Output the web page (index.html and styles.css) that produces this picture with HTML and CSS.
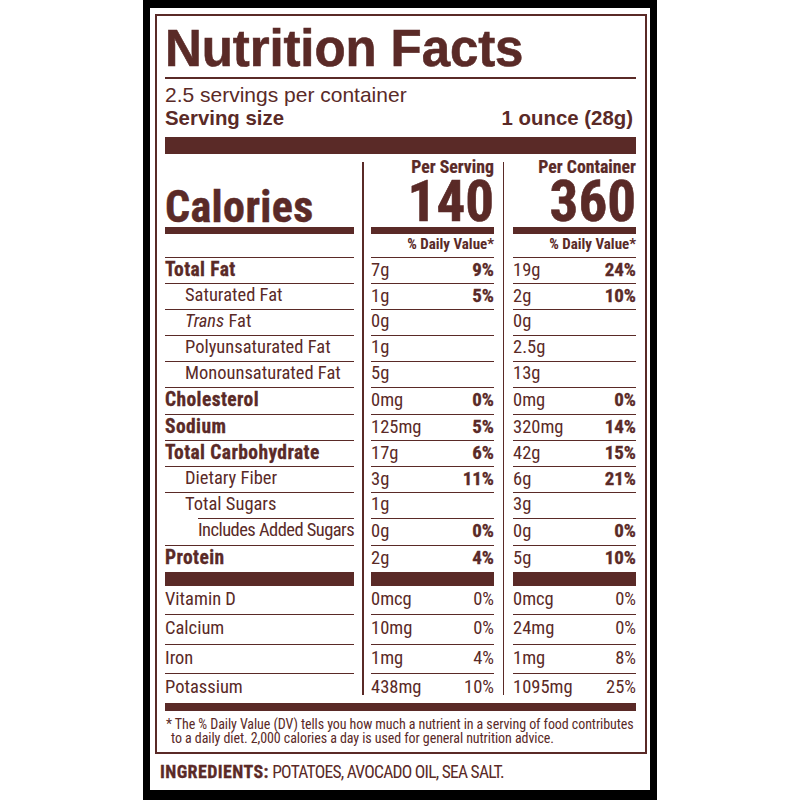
FILE: index.html
```html
<!DOCTYPE html>
<html lang="en">
<head>
<meta charset="utf-8">
<title>Nutrition Facts</title>
<link rel="stylesheet" href="styles.css">
</head>
<body>
<div class="frame">
  <div class="panel">
    <section class="facts">
      <h1 class="title">Nutrition Facts</h1>
      <div class="rule-thin"></div>
      <div class="servings">2.5 servings per container</div>
      <div class="serving-size"><span>Serving size</span><span>1 ounce (28g)</span></div>
      <div class="bar-xl"></div>

      <div class="grid">
        <div class="col col-label">
          <div class="head"><div class="calories">Calories</div></div>
          <div class="bar-md"></div>
          <div class="row dv"></div>
          <div class="row b">Total Fat</div>
          <div class="row s1">Saturated Fat</div>
          <div class="row s1"><span><i>Trans</i> Fat</span></div>
          <div class="row s1">Polyunsaturated Fat</div>
          <div class="row s1">Monounsaturated Fat</div>
          <div class="row b">Cholesterol</div>
          <div class="row b">Sodium</div>
          <div class="row b">Total Carbohydrate</div>
          <div class="row s1">Dietary Fiber</div>
          <div class="row s1 indent-line">Total Sugars</div>
          <div class="row s2">Includes Added Sugars</div>
          <div class="row b last">Protein</div>
          <div class="bar-lg"></div>
          <div class="vrow">Vitamin D</div>
          <div class="vrow">Calcium</div>
          <div class="vrow">Iron</div>
          <div class="vrow last">Potassium</div>
        </div>

        <div class="vdiv vdiv-a"></div>

        <div class="col col-mid">
          <div class="head"><div class="per">Per Serving</div><div class="big">140</div></div>
          <div class="bar-md"></div>
          <div class="row dv">% Daily Value*</div>
          <div class="row"><span class="v">7g</span><span class="p">9%</span></div>
          <div class="row"><span class="v">1g</span><span class="p">5%</span></div>
          <div class="row"><span class="v">0g</span></div>
          <div class="row"><span class="v">1g</span></div>
          <div class="row"><span class="v">5g</span></div>
          <div class="row"><span class="v">0mg</span><span class="p">0%</span></div>
          <div class="row"><span class="v">125mg</span><span class="p">5%</span></div>
          <div class="row"><span class="v">17g</span><span class="p">6%</span></div>
          <div class="row"><span class="v">3g</span><span class="p">11%</span></div>
          <div class="row"><span class="v">1g</span></div>
          <div class="row"><span class="v">0g</span><span class="p">0%</span></div>
          <div class="row last"><span class="v">2g</span><span class="p">4%</span></div>
          <div class="bar-lg"></div>
          <div class="vrow"><span>0mcg</span><span>0%</span></div>
          <div class="vrow"><span>10mg</span><span>0%</span></div>
          <div class="vrow"><span>1mg</span><span>4%</span></div>
          <div class="vrow last"><span>438mg</span><span>10%</span></div>
        </div>

        <div class="vdiv vdiv-b"></div>

        <div class="col col-right">
          <div class="head"><div class="per">Per Container</div><div class="big">360</div></div>
          <div class="bar-md"></div>
          <div class="row dv">% Daily Value*</div>
          <div class="row"><span class="v">19g</span><span class="p">24%</span></div>
          <div class="row"><span class="v">2g</span><span class="p">10%</span></div>
          <div class="row"><span class="v">0g</span></div>
          <div class="row"><span class="v">2.5g</span></div>
          <div class="row"><span class="v">13g</span></div>
          <div class="row"><span class="v">0mg</span><span class="p">0%</span></div>
          <div class="row"><span class="v">320mg</span><span class="p">14%</span></div>
          <div class="row"><span class="v">42g</span><span class="p">15%</span></div>
          <div class="row"><span class="v">6g</span><span class="p">21%</span></div>
          <div class="row"><span class="v">3g</span></div>
          <div class="row"><span class="v">0g</span><span class="p">0%</span></div>
          <div class="row last"><span class="v">5g</span><span class="p">10%</span></div>
          <div class="bar-lg"></div>
          <div class="vrow"><span>0mcg</span><span>0%</span></div>
          <div class="vrow"><span>24mg</span><span>0%</span></div>
          <div class="vrow"><span>1mg</span><span>8%</span></div>
          <div class="vrow last"><span>1095mg</span><span>25%</span></div>
        </div>
      </div>

      <div class="bar-foot"></div>
      <p class="footnote">* The % Daily Value (DV) tells you how much a nutrient in a serving of food contributes<br>to a daily diet. 2,000 calories a day is used for general nutrition advice.</p>
    </section>
    <p class="ingredients"><b>INGREDIENTS:</b> POTATOES, AVOCADO OIL, SEA SALT.</p>
  </div>
</div>
</body>
</html>
```

FILE: styles.css
```css
:root {
  --c: #5a2a27;
  --narrow: "Roboto Condensed", "Liberation Sans Narrow", "Arial Narrow", sans-serif;
  --wide: "Liberation Sans", Arial, sans-serif;
}

* {
  box-sizing: border-box;
  margin: 0;
  padding: 0;
}

html,
body {
  background: #fff;
}

body {
  display: flex;
  justify-content: center;
  font-family: var(--wide);
  color: var(--c);
}

.frame {
  width: 514px;
  height: 800px;
  background: #000;
  padding: 8px 7px 10px;
}

.panel {
  background: #fff;
  height: 782px;
  padding: 6px 3px 0 5px;
}

.facts {
  border: 2px solid var(--c);
  padding: 7px 9px 6.8px 8px;
}

.title {
  font-family: var(--wide);
  font-weight: bold;
  font-size: 51px;
  line-height: 51px;
  letter-spacing: -0.1px;
  -webkit-text-stroke: 0.6px var(--c);
}

.rule-thin {
  margin-top: 3px;
  height: 1.5px;
  background: var(--c);
}

.servings {
  margin-top: 6px;
  font-size: 21px;
  line-height: 19px;
}

.serving-size {
  margin-top: 5.5px;
  display: flex;
  justify-content: space-between;
  font-weight: bold;
  font-size: 20.4px;
  line-height: 19px;
  padding-right: 3px;
}

.bar-xl {
  margin-top: 9px;
  height: 17px;
  background: var(--c);
}

.grid {
  display: flex;
}

.col-label {
  width: 189px;
}

.col-mid {
  width: 123px;
}

.col-right {
  flex: 1;
}

.vdiv {
  width: 1.5px;
  margin-top: 8px;
  background: var(--c);
}

.vdiv-a {
  margin-left: 8px;
  margin-right: 7.5px;
}

.vdiv-b {
  margin-left: 8.5px;
  margin-right: 9px;
}

.head {
  height: 73px;
  display: flex;
  flex-direction: column;
  justify-content: flex-end;
  text-align: right;
  font-family: var(--narrow);
  font-weight: bold;
}

.calories {
  text-align: left;
  font-size: 44px;
  line-height: 40px;
  letter-spacing: 0.4px;
  -webkit-text-stroke: 0.5px var(--c);
}

.per {
  font-size: 17.8px;
  line-height: 16px;
  margin-bottom: 3.6px;
  -webkit-text-stroke: 0.2px var(--c);
}

.big {
  font-size: 57px;
  line-height: 46px;
  margin-bottom: 2.5px;
  -webkit-text-stroke: 0.6px var(--c);
}

.bar-md {
  height: 7px;
  background: var(--c);
}

.row {
  height: 26.2px;
  border-bottom: 1.5px solid var(--c);
  line-height: 23.3px;
  display: flex;
  justify-content: space-between;
  align-items: baseline;
  font-family: var(--narrow);
  font-size: 18.5px;
  white-space: nowrap;
}

.row.dv {
  height: 23.5px;
  line-height: 20px;
  justify-content: flex-end;
  font-weight: bold;
  font-size: 15px;
}

.row.last {
  border-bottom: none;
}

.row.b {
  font-weight: bold;
  font-size: 19.5px;
  letter-spacing: 0.4px;
  -webkit-text-stroke: 0.3px var(--c);
}

.row.s1 {
  padding-left: 20px;
}

.row.s2 {
  padding-left: 33px;
  letter-spacing: -0.55px;
}

.row.indent-line {
  border-bottom: none;
  background: linear-gradient(var(--c), var(--c)) no-repeat right bottom / calc(100% - 33px) 1.5px;
}

.p {
  font-weight: bold;
  font-size: 19px;
  -webkit-text-stroke: 0.3px var(--c);
}

.bar-lg {
  height: 14px;
  background: var(--c);
}

.vrow {
  height: 29.4px;
  border-bottom: 1.5px solid var(--c);
  line-height: 27.9px;
  display: flex;
  justify-content: space-between;
  font-family: var(--narrow);
  font-size: 18.5px;
  white-space: nowrap;
}

.vrow.last {
  height: 21px;
  border-bottom: none;
}

.bar-foot {
  margin-top: 8px;
  height: 8px;
  background: var(--c);
}

.footnote {
  margin-top: 6.2px;
  font-family: var(--narrow);
  font-size: 14px;
  line-height: 14px;
  letter-spacing: -0.08px;
  padding-left: 6px;
  text-indent: -5px;
  white-space: nowrap;
}

.ingredients {
  margin-top: 7.75px;
  padding-left: 5px;
  font-family: var(--narrow);
  font-size: 17.5px;
  line-height: 20px;
  letter-spacing: -0.75px;
}

.ingredients b {
  font-size: 18px;
  letter-spacing: 0.4px;
  -webkit-text-stroke: 0.3px var(--c);
}
```
